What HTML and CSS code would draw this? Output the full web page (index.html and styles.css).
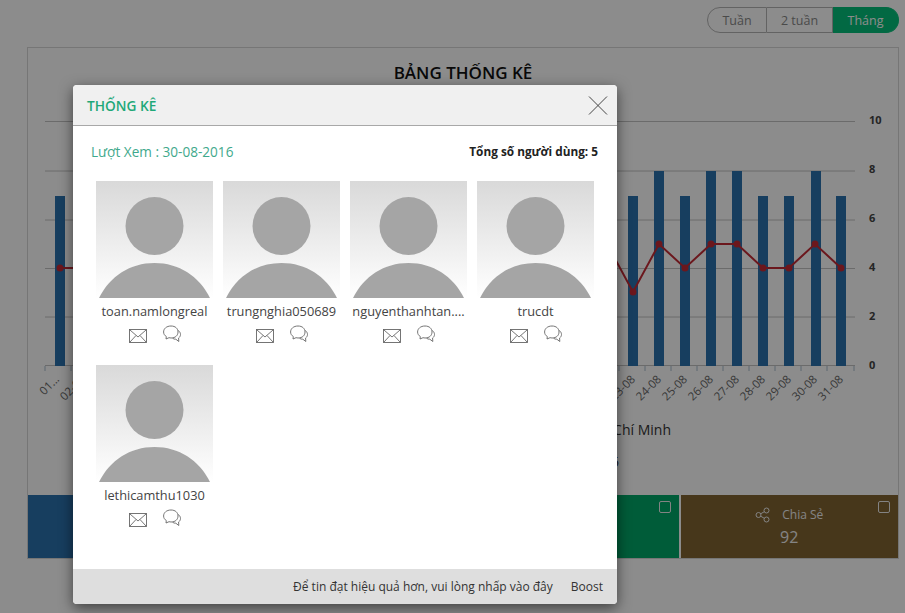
FILE: index.html
```html
<!DOCTYPE html>
<html lang="en">
<head>
    <meta charset="UTF-8">
    <meta name="viewport" content="width=device-width, initial-scale=1.0">
    <title>Thống kê</title>
    <link rel="stylesheet" href="styles.css">
</head>
<body>
    <svg class="defs" width="0" height="0">
        <symbol id="avatar" viewBox="0 0 117 117">
            <circle cx="58.5" cy="45" r="29"/>
            <path d="M3 117 C14 95 34 82 58.5 82 C83 82 103 95 114 117 Z"/>
        </symbol>
        <symbol id="mail" viewBox="0 0 18 14">
            <rect x="0.5" y="0.5" width="17" height="13"/>
            <path d="M1 1 L9 8 L17 1 M1 13 L7 6.5 M17 13 L11 6.5"/>
        </symbol>
        <symbol id="chat" viewBox="0 0 18 18">
            <path d="M8 1 C3.5 1 .6 3.7 .6 7 C.6 9 1.6 10.5 3.3 11.5 L3 14 L6 12.7 C6.7 12.9 7.3 13 8 13 C12.5 13 15 10.3 15 7 C15 3.7 12.5 1 8 1 Z"/>
            <path d="M15.2 5.5 C16.7 6.5 17.5 8 17.5 9.5 C17.5 11 16.7 12.2 15.6 13 L15.8 16.5 L12.8 14.2 C11.6 14.3 10.5 14 9.5 13.2"/>
        </symbol>
    </svg>

    <div class="page">
        <div class="range">
            <a>Tuần</a>
            <a>2 tuần</a>
            <a class="active">Tháng</a>
        </div>

        <div class="panel">
            <h2>BẢNG THỐNG KÊ</h2>

            <svg class="chart" width="870" height="410" viewBox="28 85 870 410">
                <g class="grid">
                    <path d="M45 121.5H855M45 171H855M45 220H855M45 268.5H855M45 317H855M45 365.5H855"/>
                </g>
                <g class="ticks">
                    <path d="M45 366v5M71 366v5M619 366v5M645 366v5M671 366v5M697 366v5M723 366v5M749 366v5M775 366v5M801 366v5M827 366v5M854 366v5"/>
                </g>
                <g class="bars">
                    <rect x="55" y="196" width="10" height="170"/>
                    <rect x="628" y="196" width="10" height="170"/>
                    <rect x="654" y="171" width="10" height="195"/>
                    <rect x="680" y="196" width="10" height="170"/>
                    <rect x="706" y="171" width="10" height="195"/>
                    <rect x="732" y="171" width="10" height="195"/>
                    <rect x="758" y="196" width="10" height="170"/>
                    <rect x="784" y="196" width="10" height="170"/>
                    <rect x="811" y="171" width="10" height="195"/>
                    <rect x="836" y="196" width="10" height="170"/>
                </g>
                <polyline class="line" points="60,268 86,268"/>
                <polyline class="line" points="607,244 633,292 659,244 685,268 711,244 737,244 763,268 789,268 815,244 841,268"/>
                <g class="dots">
                    <circle cx="60" cy="268" r="3.5"/>
                    <circle cx="633" cy="292" r="3.5"/>
                    <circle cx="659" cy="244" r="3.5"/>
                    <circle cx="685" cy="268" r="3.5"/>
                    <circle cx="711" cy="244" r="3.5"/>
                    <circle cx="737" cy="244" r="3.5"/>
                    <circle cx="763" cy="268" r="3.5"/>
                    <circle cx="789" cy="268" r="3.5"/>
                    <circle cx="815" cy="244" r="3.5"/>
                    <circle cx="841" cy="268" r="3.5"/>
                </g>
                <g class="y-labels">
                    <text x="869" y="124">10</text>
                    <text x="869" y="173">8</text>
                    <text x="869" y="222">6</text>
                    <text x="869" y="271">4</text>
                    <text x="869" y="320">2</text>
                    <text x="869" y="369">0</text>
                </g>
                <g class="x-labels">
                    <text transform="translate(60 380) rotate(-45)">01...</text>
                    <text transform="translate(86 380) rotate(-45)">02-08</text>
                    <text transform="translate(636 380) rotate(-45)">23-08</text>
                    <text transform="translate(662 380) rotate(-45)">24-08</text>
                    <text transform="translate(688 380) rotate(-45)">25-08</text>
                    <text transform="translate(714 380) rotate(-45)">26-08</text>
                    <text transform="translate(740 380) rotate(-45)">27-08</text>
                    <text transform="translate(766 380) rotate(-45)">28-08</text>
                    <text transform="translate(792 380) rotate(-45)">29-08</text>
                    <text transform="translate(818 380) rotate(-45)">30-08</text>
                    <text transform="translate(844 380) rotate(-45)">31-08</text>
                </g>
                <text class="place" x="671" y="435">Hồ Chí Minh</text>
                <text class="place" x="619" y="467">5</text>
            </svg>

            <div class="tiles">
                <div class="tile blue"></div>
                <div class="tile blue"></div>
                <div class="tile green"><span class="check"></span></div>
                <div class="tile brown">
                    <span class="check"></span>
                    <div class="tile-label">
                        <svg width="16" height="16" viewBox="0 0 16 16">
                            <circle cx="3.5" cy="8" r="2.5"/>
                            <circle cx="11.5" cy="3.5" r="2.5"/>
                            <circle cx="11.5" cy="12.5" r="2.5"/>
                            <path d="M5.7 6.8 L9.3 4.7 M5.7 9.2 L9.3 11.3"/>
                        </svg>
                        <span>Chia Sẻ</span>
                    </div>
                    <div class="tile-num">92</div>
                </div>
            </div>
        </div>
    </div>

    <div class="overlay">
        <div class="modal">
            <div class="modal-head">
                <h4>THỐNG KÊ</h4>
                <svg class="close" width="20" height="19" viewBox="0 0 20 19">
                    <path d="M1 0.5 L19 18.5 M19 0.5 L1 18.5"/>
                </svg>
            </div>

            <div class="modal-body">
                <div class="summary">
                    <span class="views">Lượt Xem : 30-08-2016</span>
                    <b>Tổng số người dùng: 5</b>
                </div>

                <div class="users">
                    <div class="user">
                        <svg class="avatar"><use href="#avatar"/></svg>
                        <div class="name">toan.namlongreal</div>
                        <div class="actions">
                            <svg class="mail"><use href="#mail"/></svg>
                            <svg class="chat"><use href="#chat"/></svg>
                        </div>
                    </div>
                    <div class="user">
                        <svg class="avatar"><use href="#avatar"/></svg>
                        <div class="name">trungnghia050689</div>
                        <div class="actions">
                            <svg class="mail"><use href="#mail"/></svg>
                            <svg class="chat"><use href="#chat"/></svg>
                        </div>
                    </div>
                    <div class="user">
                        <svg class="avatar"><use href="#avatar"/></svg>
                        <div class="name">nguyenthanhtan....</div>
                        <div class="actions">
                            <svg class="mail"><use href="#mail"/></svg>
                            <svg class="chat"><use href="#chat"/></svg>
                        </div>
                    </div>
                    <div class="user">
                        <svg class="avatar"><use href="#avatar"/></svg>
                        <div class="name">trucdt</div>
                        <div class="actions">
                            <svg class="mail"><use href="#mail"/></svg>
                            <svg class="chat"><use href="#chat"/></svg>
                        </div>
                    </div>
                    <div class="user">
                        <svg class="avatar"><use href="#avatar"/></svg>
                        <div class="name">lethicamthu1030</div>
                        <div class="actions">
                            <svg class="mail"><use href="#mail"/></svg>
                            <svg class="chat"><use href="#chat"/></svg>
                        </div>
                    </div>
                </div>
            </div>

            <div class="modal-foot">
                <span>Để tin đạt hiệu quả hơn, vui lòng nhấp vào đây</span>
                <span>Boost</span>
            </div>
        </div>
    </div>
</body>
</html>
```

FILE: styles.css
```css
html, body {
    height: 613px;
    overflow: hidden;
}

body {
    margin: 0;
    background: #fff;
    font-family: "Open Sans", sans-serif;
    color: #333;
}

.defs {
    display: block;
}

.page {
    padding: 7px 6px 0 27px;
}

/* range switch */
.range {
    display: flex;
    justify-content: flex-end;
    height: 26px;
}

.range a {
    display: flex;
    align-items: center;
    justify-content: center;
    box-sizing: border-box;
    border: 1px solid #b5b5b5;
    border-left: none;
    font-size: 12.5px;
    color: #888;
    width: 66px;
}

.range a:first-child {
    width: 60px;
    border-left: 1px solid #b5b5b5;
    border-radius: 13px 0 0 13px;
}

.range a.active {
    background: #05c07a;
    border-color: #05c07a;
    color: #fff;
    border-radius: 0 13px 13px 0;
}

/* panel */
.panel {
    margin-top: 14px;
    border: 1px solid #d8d8d8;
    width: 870px;
}

.panel h2 {
    margin: 0;
    height: 23px;
    padding-top: 14px;
    font-size: 17px;
    line-height: 22px;
    font-weight: 600;
    text-align: center;
    color: #111;
}

.chart {
    display: block;
}

.grid path {
    stroke: #c4c4c4;
    fill: none;
}

.ticks path {
    stroke: #a9bccc;
    fill: none;
}

.bars rect {
    fill: #2a72ad;
}

.line {
    fill: none;
    stroke: #c42b35;
    stroke-width: 2;
}

.dots circle {
    fill: #c42b35;
}

.y-labels text {
    font-size: 11px;
    font-weight: 700;
    fill: #444;
}

.x-labels text {
    font-size: 11.5px;
    text-anchor: end;
    fill: #666;
}

.place {
    font-size: 14px;
    fill: #333;
    text-anchor: end;
}

/* stat tiles */
.tiles {
    display: grid;
    grid-template-columns: repeat(4, 1fr);
    height: 63px;
}

.tile {
    position: relative;
    color: #fff;
    text-align: center;
}

.tile.blue {
    background: #2a72ad;
}

.tile.green {
    background: #00a868;
    border-right: 2px solid #fff;
}

.tile.brown {
    background: #826432;
}

.check {
    position: absolute;
    top: 6px;
    right: 8px;
    width: 12px;
    height: 12px;
    box-sizing: border-box;
    border: 1.5px solid #eee;
    border-radius: 2px;
}

.tile-label {
    display: flex;
    align-items: center;
    justify-content: center;
    gap: 11px;
    margin-top: 11px;
    font-size: 12px;
    line-height: 17px;
    color: #f0f0f0;
}

.tile-label svg {
    fill: none;
    stroke: #f0f0f0;
}

.tile-num {
    margin-top: 4px;
    font-size: 16px;
    line-height: 20px;
    color: #f0f0f0;
}

/* modal */
.overlay {
    position: absolute;
    top: 0;
    left: 0;
    right: 0;
    bottom: 0;
    background: rgba(0, 0, 0, 0.45);
}

.modal {
    display: flex;
    flex-direction: column;
    margin: 85px 0 0 73px;
    width: 544px;
    height: 519px;
    background: #fff;
    border-radius: 4px;
    box-shadow: 0 4px 14px rgba(0, 0, 0, 0.55);
    overflow: hidden;
}

.modal-head {
    display: flex;
    align-items: center;
    justify-content: space-between;
    height: 40px;
    padding: 0 9px 0 14px;
    background: #f0f0f0;
    border-bottom: 1px solid #a8a8a8;
}

.modal-head h4 {
    margin: 0;
    font-size: 13.7px;
    font-weight: 600;
    color: #1fa878;
}

.close path {
    stroke: #444;
    fill: none;
}

.modal-body {
    flex: 1;
    padding: 15px 19px 0 18px;
}

.summary {
    display: flex;
    align-items: center;
    justify-content: space-between;
    height: 20px;
}

.views {
    font-size: 13.6px;
    color: #3fa98c;
}

.summary b {
    font-size: 11.8px;
    color: #222;
}

.users {
    display: grid;
    grid-template-columns: repeat(4, 117px);
    column-gap: 10px;
    grid-auto-rows: 184px;
    margin: 20px 0 0 5px;
}

.avatar {
    display: block;
    width: 117px;
    height: 117px;
    background: linear-gradient(#d9d9d9, #fff);
    fill: #a5a5a5;
}

.name {
    margin-top: 4px;
    height: 18px;
    font-size: 12.8px;
    line-height: 18px;
    color: #444;
    text-align: center;
    white-space: nowrap;
}

.actions {
    display: flex;
    justify-content: center;
    align-items: flex-start;
    gap: 16px;
    margin-top: 5px;
}

.actions svg {
    fill: none;
    stroke: #666;
    stroke-width: 0.9;
}

.mail {
    width: 18px;
    height: 14px;
    margin-top: 4px;
}

.chat {
    width: 18px;
    height: 18px;
}

.modal-foot {
    display: flex;
    justify-content: flex-end;
    align-items: center;
    gap: 18px;
    height: 35px;
    padding-right: 14px;
    background: #dedede;
    font-size: 12px;
    color: #333;
}
```
